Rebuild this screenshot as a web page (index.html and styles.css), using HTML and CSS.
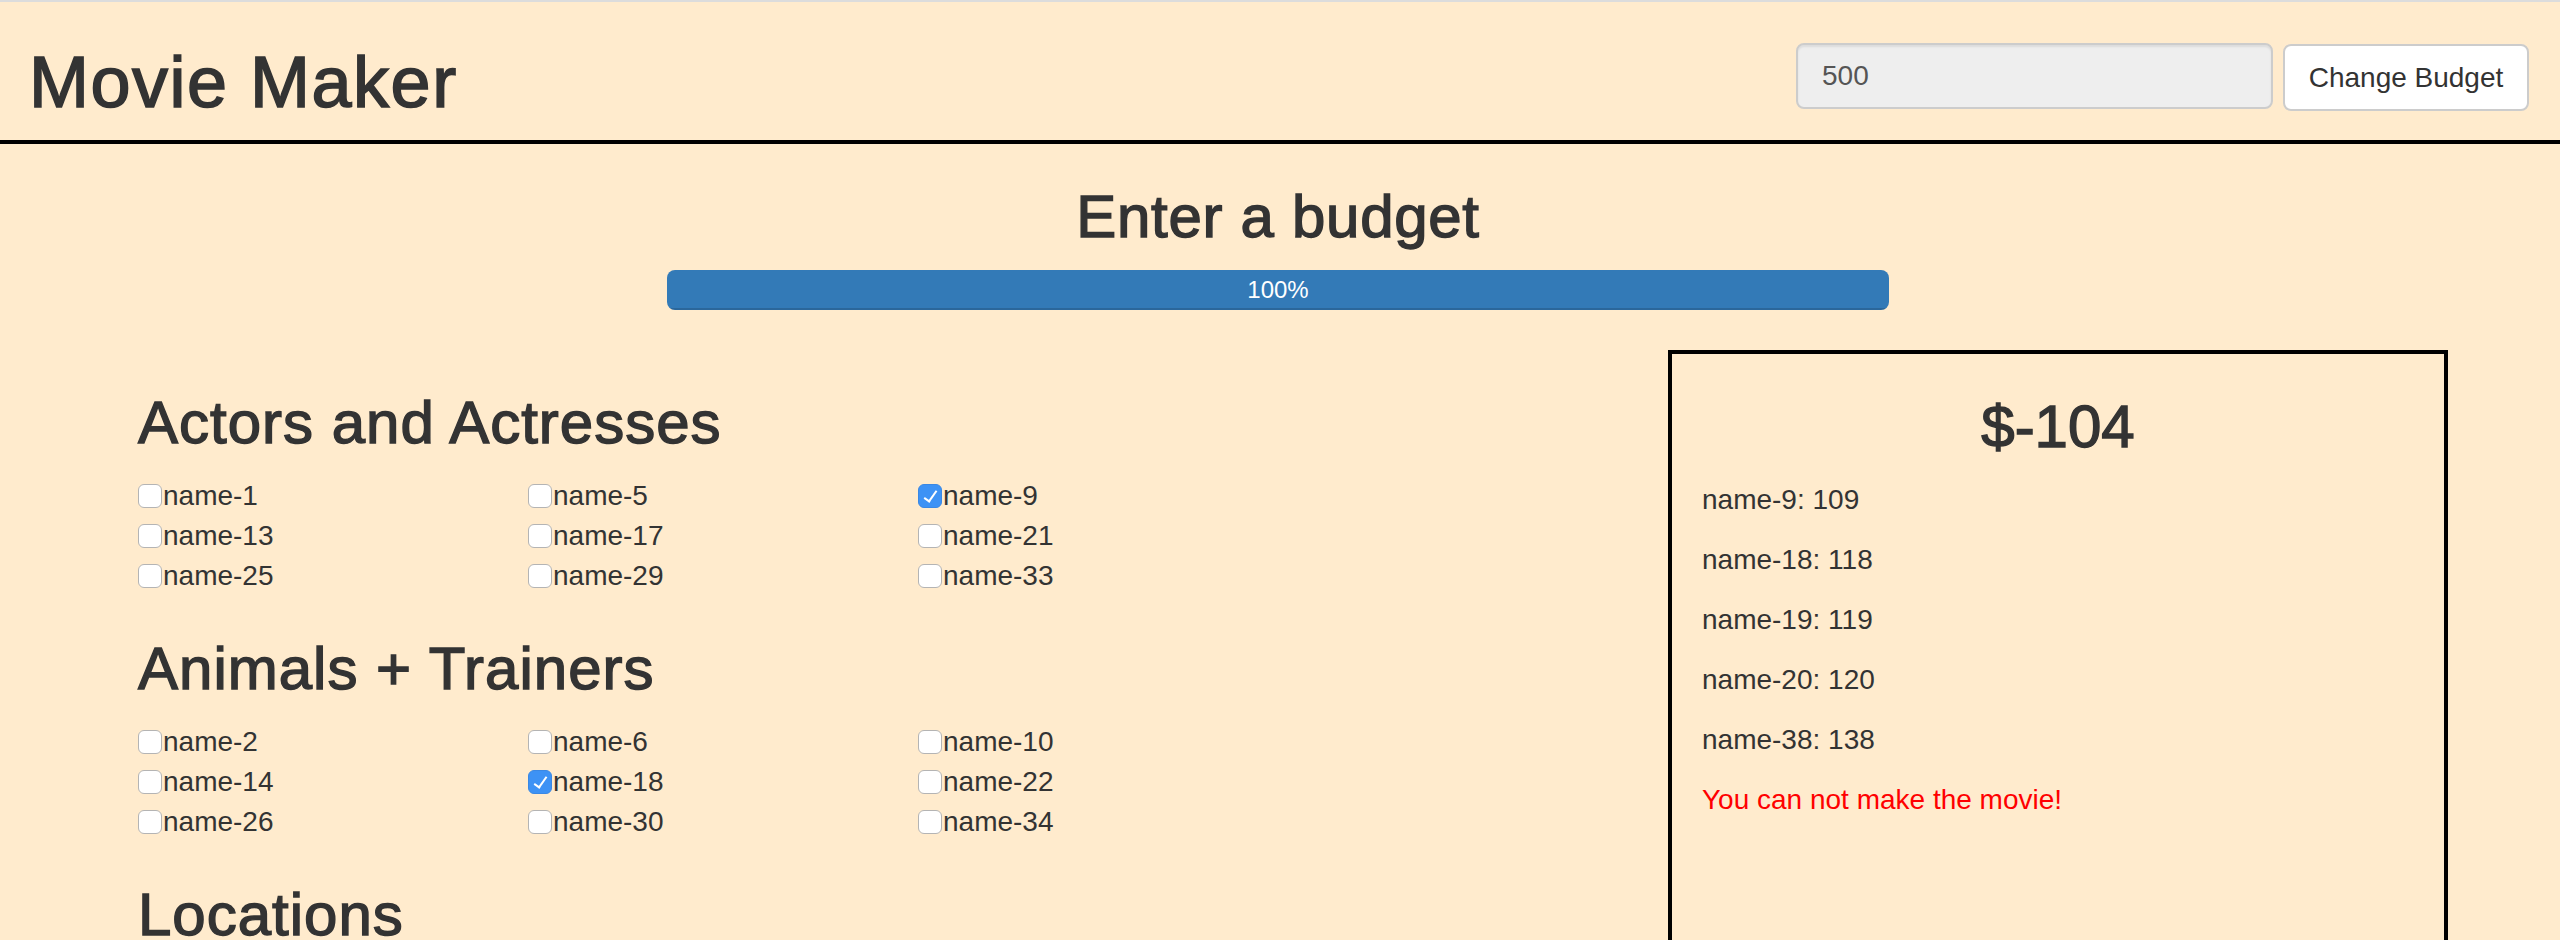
FILE: index.html
```html
<!DOCTYPE html>
<html lang="en">
<head>
<meta charset="utf-8">
<title>Movie Maker</title>
<link rel="stylesheet" href="styles.css">
</head>
<body>
<header class="topbar">
  <h1 class="brand">Movie Maker</h1>
  <form class="budget-form">
    <input class="budget-input" type="text" value="500" readonly>
    <button class="budget-btn" type="button">Change Budget</button>
  </form>
</header>
<main class="page">
  <h2 class="budget-title">Enter a budget</h2>
  <div class="progress"><div class="progress-bar" style="width:100%">100%</div></div>
  <div class="container">
    <div class="picker">
      <section class="group">
        <h2 class="section-title">Actors and Actresses</h2>
        <div class="options">
          <label class="option"><input type="checkbox">name-1</label>
          <label class="option"><input type="checkbox">name-5</label>
          <label class="option"><input type="checkbox" checked>name-9</label>
          <label class="option"><input type="checkbox">name-13</label>
          <label class="option"><input type="checkbox">name-17</label>
          <label class="option"><input type="checkbox">name-21</label>
          <label class="option"><input type="checkbox">name-25</label>
          <label class="option"><input type="checkbox">name-29</label>
          <label class="option"><input type="checkbox">name-33</label>
        </div>
      </section>
      <section class="group">
        <h2 class="section-title">Animals + Trainers</h2>
        <div class="options">
          <label class="option"><input type="checkbox">name-2</label>
          <label class="option"><input type="checkbox">name-6</label>
          <label class="option"><input type="checkbox">name-10</label>
          <label class="option"><input type="checkbox">name-14</label>
          <label class="option"><input type="checkbox" checked>name-18</label>
          <label class="option"><input type="checkbox">name-22</label>
          <label class="option"><input type="checkbox">name-26</label>
          <label class="option"><input type="checkbox">name-30</label>
          <label class="option"><input type="checkbox">name-34</label>
        </div>
      </section>
      <section class="group">
        <h2 class="section-title">Locations</h2>
      </section>
    </div>
    <aside class="summary">
      <h2 class="total">$-104</h2>
      <p>name-9: 109</p>
      <p>name-18: 118</p>
      <p>name-19: 119</p>
      <p>name-20: 120</p>
      <p>name-38: 138</p>
      <p class="warning">You can not make the movie!</p>
    </aside>
  </div>
</main>
</body>
</html>
```

FILE: styles.css
```css
* { box-sizing: border-box; }
html, body { margin: 0; }
body {
  background: #ffebcd;
  font-family: "Liberation Sans", Arial, sans-serif;
  font-size: 28px;
  line-height: 40px;
  color: #333;
}
.topbar {
  display: flex;
  justify-content: space-between;
  align-items: flex-start;
  border-top: 2px solid #dcdcdc;
  border-bottom: 4px solid #000;
  padding: 41px 31px 18px 29px;
}
.brand {
  margin: 0;
  font-size: 72px;
  line-height: 79px;
  font-weight: normal;
  letter-spacing: 1.5px;
  -webkit-text-stroke: 1.6px #333;
}
.budget-form { display: flex; align-items: flex-start; gap: 10px; margin: 0; }
.budget-input {
  width: 477px;
  height: 66px;
  border: 2px solid #ccc;
  border-radius: 8px;
  background: #eee;
  color: #555;
  font: 28px "Liberation Sans", Arial, sans-serif;
  padding: 0 24px;
  box-shadow: inset 0 2px 2px rgba(0,0,0,.075);
  outline: none;
}
.budget-btn {
  margin-top: 1px;
  height: 67px;
  width: 246px;
  background: #fff;
  border: 2px solid #ccc;
  border-radius: 8px;
  font: 28px "Liberation Sans", Arial, sans-serif;
  color: #333;
  padding: 0 16px;
}
.page { padding-right: 4px; }
.budget-title,
.section-title,
.total {
  font-size: 60px;
  line-height: 66px;
  font-weight: normal;
  margin: 40px 0 20px;
  -webkit-text-stroke: 1.4px #333;
}
.budget-title { text-align: center; letter-spacing: 0.7px; }
.section-title { letter-spacing: 1px; }
.total { text-align: center; }
.progress {
  width: 1222px;
  height: 40px;
  margin: 0 auto 40px;
  border-radius: 8px;
  background: #f5f5f5;
  overflow: hidden;
}
.progress-bar {
  height: 100%;
  background: #337ab7;
  color: #fff;
  text-align: center;
  font-size: 24px;
  line-height: 40px;
  box-shadow: inset 0 -2px 0 rgba(0,0,0,.15);
}
.container {
  width: 2340px;
  margin: 0 auto;
  display: grid;
  grid-template-columns: 1560px 780px;
  align-items: start;
}
.picker { padding: 0 30px; }
.options { display: grid; grid-template-columns: repeat(3, 390px); }
.option { display: flex; align-items: center; height: 40px; }
.option input {
  appearance: none;
  -webkit-appearance: none;
  margin: 0 1px 0 0;
  width: 24px;
  height: 24px;
  border: 1.5px solid #b4b4b4;
  border-radius: 6px;
  background: #fff;
  position: relative;
  flex: none;
}
.option input:checked { background: #3d92f5; border-color: #3a88e4; }
.option input:checked::after {
  content: "";
  position: absolute;
  left: 8px;
  top: 3px;
  width: 5px;
  height: 12px;
  border: solid #fff;
  border-width: 0 2px 2px 0;
  transform: rotate(35deg);
}
.summary {
  border: 4px solid #000;
  padding: 0 30px;
  min-height: 760px;
}
.summary p { margin: 0 0 20px; }
.summary .warning { color: #ff0000; }
```
